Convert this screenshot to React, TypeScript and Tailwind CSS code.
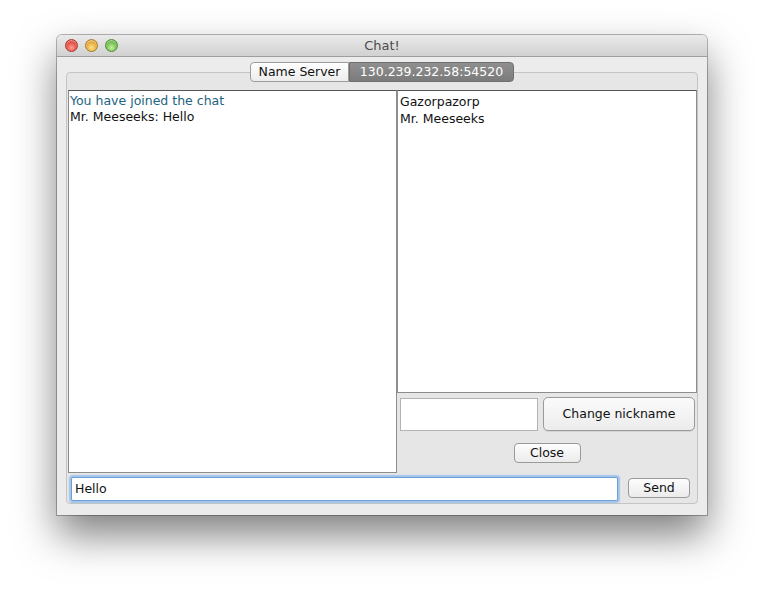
import React from "react";

const font = { fontFamily: '"DejaVu Sans", "Liberation Sans", sans-serif' };

function Light({ c1, c2, b }: { c1: string; c2: string; b: string }) {
  return (
    <div
      className="w-[13px] h-[13px] rounded-full"
      style={{
        background: `radial-gradient(circle at 50% 70%, ${c1} 0%, ${c2} 75%)`,
        border: `1px solid ${b}`,
        boxShadow: "inset 0 1px 1px rgba(255,255,255,0.6)",
      }}
    />
  );
}

export default function App() {
  return (
    <div className="w-[764px] h-[594px] bg-white pt-[35px] pl-[57px]" style={font}>
      <div className="w-[650px] h-[480px] rounded-t-[5px] bg-[#ececec] shadow-[0_20px_40px_rgba(0,0,0,0.5),0_0_0_1px_rgba(0,0,0,0.28)] flex flex-col overflow-hidden">
        {/* title bar */}
        <div className="relative h-[22px] shrink-0 bg-gradient-to-b from-[#eaeaea] to-[#d1d1d1] border-b border-[#9e9e9e] flex items-center pl-[8px] gap-[7px]">
          <Light c1="#ff9a8f" c2="#d9382e" b="#a8342c" />
          <Light c1="#ffe08a" c2="#dd9b25" b="#a97a27" />
          <Light c1="#c7f0a0" c2="#5aae38" b="#4e8a33" />
          <div className="absolute inset-0 flex items-center justify-center text-[13px] text-[#4b4b4b] pointer-events-none">
            Chat!
          </div>
        </div>
        {/* body */}
        <div className="flex-1 px-[9px] pt-[5px]">
          <div className="relative z-10 flex justify-center h-[20px] text-[12.5px]">
            <div className="w-[99px] h-[20px] flex items-center justify-center rounded-l-[4px] border border-[#9c9c9c] bg-gradient-to-b from-[#ffffff] to-[#ececec] text-[#111]">
              Name Server
            </div>
            <div className="w-[165px] h-[20px] flex items-center justify-center rounded-r-[4px] border border-[#6f6f6f] bg-gradient-to-b from-[#8f8f8f] to-[#7b7b7b] text-white">
              130.239.232.58:54520
            </div>
          </div>
          <div className="-mt-[10px] h-[432px] border border-[#c4c4c4] rounded-[4px] bg-[#e6e6e6] pt-[17px] pl-[1px] flex flex-col">
            <div className="flex h-[383px]">
              <div className="w-[329px] h-[383px] bg-white border border-[#8d8d8d] border-t-[#555] px-[1px] pt-[2px] text-[12.5px] leading-[16px]">
                <div className="text-[#1c6480]">You have joined the chat</div>
                <div className="text-[#111]">Mr. Meeseeks: Hello</div>
              </div>
              <div className="w-[300px] flex flex-col">
                <div className="h-[303px] bg-white border border-[#8d8d8d] border-t-[#555] px-[2px] pt-[2px] text-[12.5px] leading-[17px] text-[#111]">
                  <div>Gazorpazorp</div>
                  <div>Mr. Meeseeks</div>
                </div>
                <div className="flex items-start mt-[4px] pl-[3px] gap-[5px]">
                  <div className="mt-[1px] w-[138px] h-[33px] bg-white border border-[#b3b3b3]" />
                  <div className="w-[152px] h-[34px] rounded-[5px] border border-[#9a9a9a] bg-gradient-to-b from-[#fbfbfb] to-[#ececec] flex items-center justify-center text-[12.5px] text-[#111] shadow-[0_1px_0_rgba(0,0,0,0.08)]">
                    Change nickname
                  </div>
                </div>
                <div className="flex justify-center mt-[12px]">
                  <div className="w-[67px] h-[20px] rounded-[4px] border border-[#9a9a9a] bg-gradient-to-b from-[#fdfdfd] to-[#ebebeb] flex items-center justify-center text-[12.5px] text-[#111]">
                    Close
                  </div>
                </div>
              </div>
            </div>
            <div className="flex items-start mt-[4px] pl-[3px]">
              <div className="w-[547px] h-[24px] rounded-[2px] border border-[#6f9fd7] shadow-[0_0_1px_2px_#a3c5ec] bg-white flex items-center pl-[3px] text-[12.5px] text-[#111]">
                Hello
              </div>
              <div className="mt-[1px] ml-[10px] w-[62px] h-[20px] rounded-[4px] border border-[#9a9a9a] bg-gradient-to-b from-[#fdfdfd] to-[#ebebeb] flex items-center justify-center text-[12.5px] text-[#111]">
                Send
              </div>
            </div>
          </div>
        </div>
      </div>
    </div>
  );
}
